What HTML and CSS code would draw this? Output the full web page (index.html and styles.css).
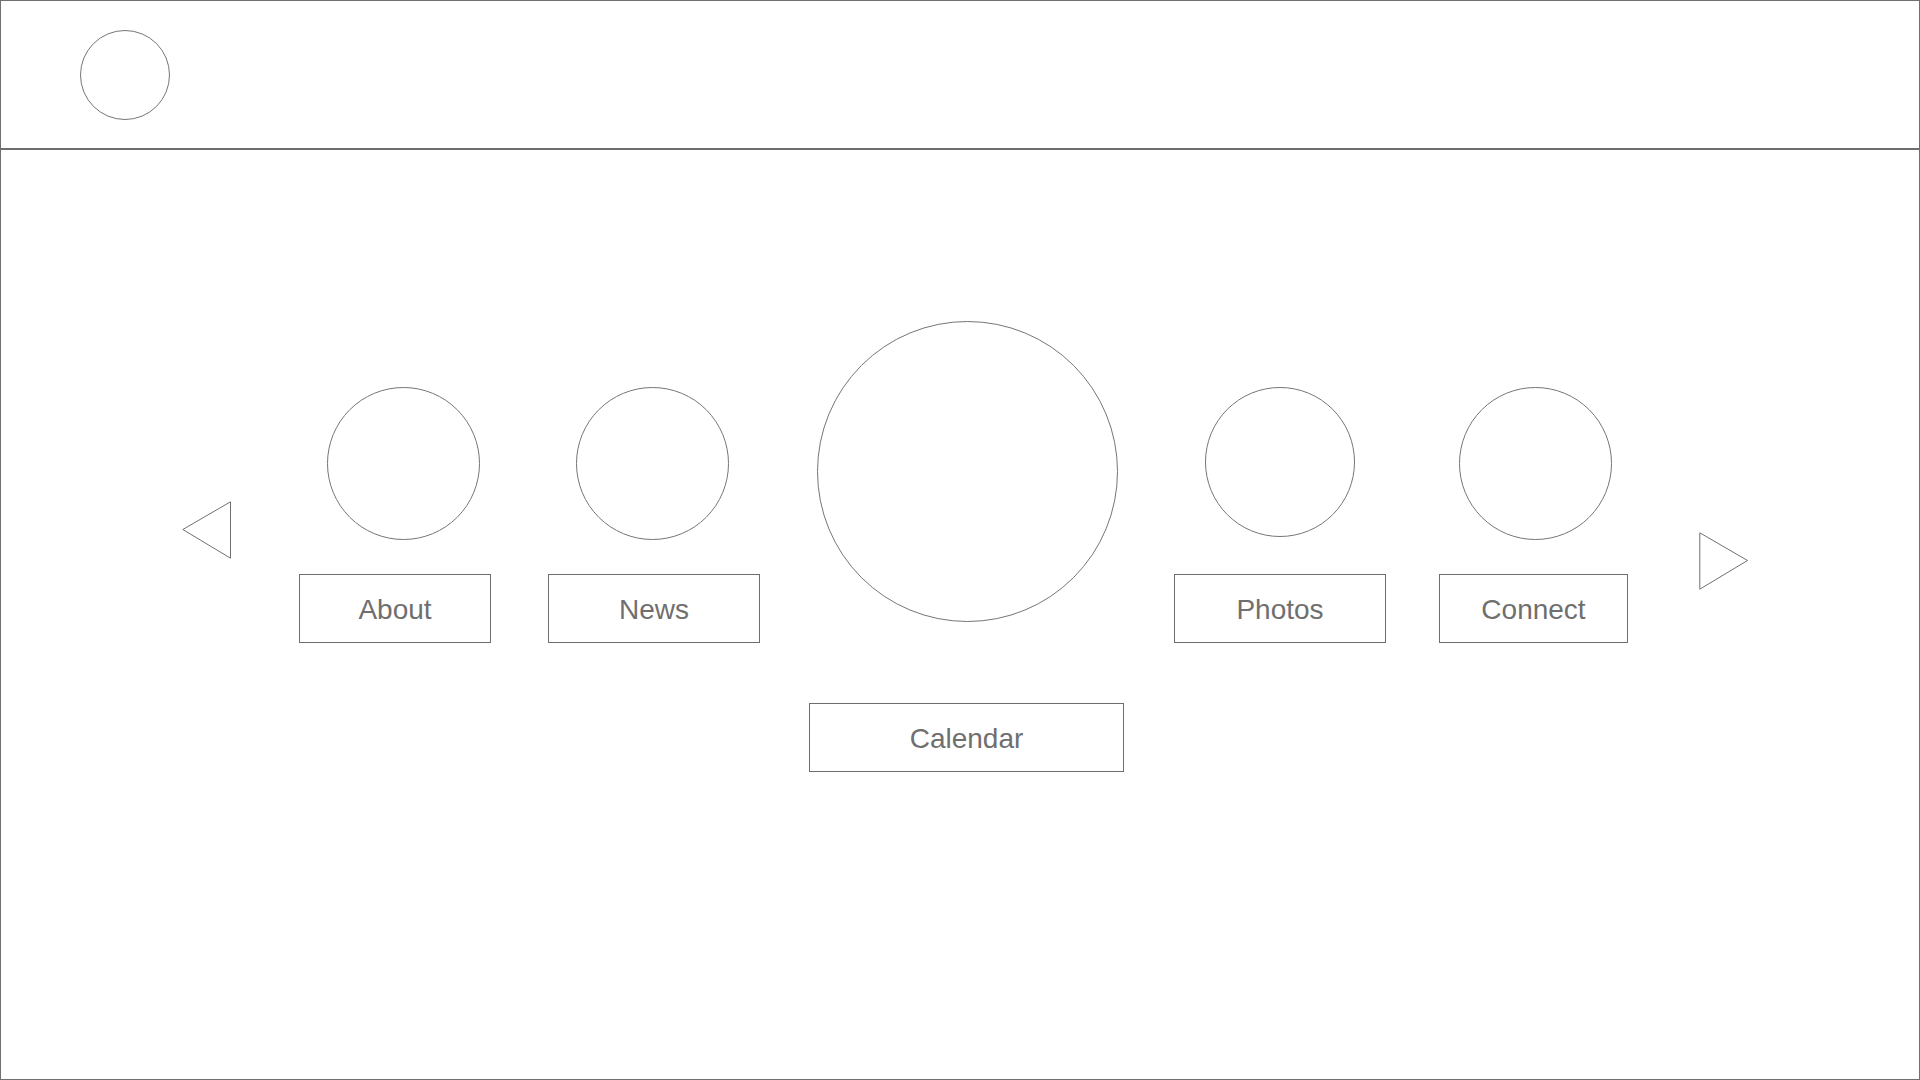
FILE: index.html
```html
<!DOCTYPE html>
<html lang="en">
<head>
<meta charset="utf-8">
<title>Wireframe</title>
<link rel="stylesheet" href="styles.css">
</head>
<body>
<div class="frame">
  <header class="header">
    <div class="logo"></div>
  </header>
  <main class="main">
    <div class="carousel">
      <button class="arrow arrow--prev" aria-label="Previous">
        <svg width="50" height="58" viewBox="0 0 50 58"><polygon points="0.8,28.5 48.5,0.8 48.5,57.2" fill="none" stroke="#707070" stroke-width="1"/></svg>
      </button>
      <div class="item item--about">
        <div class="thumb thumb--about"></div>
        <div class="label">About</div>
      </div>
      <div class="item item--news">
        <div class="thumb thumb--news"></div>
        <div class="label">News</div>
      </div>
      <div class="item item--center">
        <div class="thumb thumb--center"></div>
        <div class="label label--center">Calendar</div>
      </div>
      <div class="item item--photos">
        <div class="thumb thumb--photos"></div>
        <div class="label">Photos</div>
      </div>
      <div class="item item--connect">
        <div class="thumb thumb--connect"></div>
        <div class="label">Connect</div>
      </div>
      <button class="arrow arrow--next" aria-label="Next">
        <svg width="50" height="58" viewBox="0 0 50 58"><polygon points="0.8,0.8 48.5,28.5 0.8,57.2" fill="none" stroke="#707070" stroke-width="1"/></svg>
      </button>
    </div>
  </main>
</div>
</body>
</html>
```
FILE: styles.css
```css
html, body {
  margin: 0;
  padding: 0;
  background: #ffffff;
}

body {
  font-family: "Liberation Sans", Arial, Helvetica, sans-serif;
  color: #6f6f6f;
}

.frame {
  width: 1920px;
  height: 1080px;
  box-sizing: border-box;
  border: 1px solid #707070;
  display: flex;
  flex-direction: column;
  overflow: hidden;
}

.header {
  height: 149px;
  box-sizing: border-box;
  border-bottom: 2px solid #6e6e6e;
  padding: 29px 0 0 79px;
  flex: none;
}

.logo {
  width: 90px;
  height: 90px;
  box-sizing: border-box;
  border: 1px solid #767676;
  border-radius: 50%;
}

.main {
  flex: 1;
  padding: 171px 0 0 181px;
}

.carousel {
  display: flex;
  align-items: flex-start;
}

.arrow {
  margin: 0;
  padding: 0;
  border: 0;
  background: none;
  width: 50px;
  height: 58px;
  display: block;
  flex: none;
}

.arrow svg {
  display: block;
}

.arrow--prev {
  margin-top: 180px;
}

.arrow--next {
  margin-top: 211px;
  margin-left: 71px;
}

.item {
  display: flex;
  flex-direction: column;
  align-items: flex-start;
  flex: none;
}

.thumb {
  box-sizing: border-box;
  border: 1px solid #767676;
  border-radius: 50%;
  flex: none;
}

.label {
  height: 69px;
  box-sizing: border-box;
  border: 1px solid #6e6e6e;
  display: flex;
  align-items: center;
  justify-content: center;
  padding-top: 2px;
  font-size: 28px;
  line-height: 1;
  color: #6f6f6f;
  align-self: stretch;
}

.item--about {
  width: 192px;
  margin-left: 67px;
}
.thumb--about {
  width: 153px;
  height: 153px;
  margin: 66px 0 0 28px;
}
.item--about .label { margin-top: 34px; }

.item--news {
  width: 212px;
  margin-left: 57px;
}
.thumb--news {
  width: 153px;
  height: 153px;
  margin: 66px 0 0 28px;
}
.item--news .label { margin-top: 34px; }

.item--center {
  width: 315px;
  margin-left: 49px;
}
.thumb--center {
  width: 301px;
  height: 301px;
  margin: 0 0 0 8px;
}
.label--center { margin-top: 81px; }

.item--photos {
  width: 212px;
  margin-left: 50px;
}
.thumb--photos {
  width: 150px;
  height: 150px;
  margin: 66px 0 0 31px;
}
.item--photos .label { margin-top: 37px; }

.item--connect {
  width: 189px;
  margin-left: 53px;
}
.thumb--connect {
  width: 153px;
  height: 153px;
  margin: 66px 0 0 20px;
}
.item--connect .label { margin-top: 34px; }
```
